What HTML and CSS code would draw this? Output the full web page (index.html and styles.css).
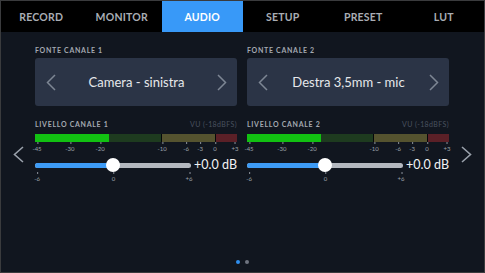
FILE: index.html
```html
<!DOCTYPE html>
<html lang="it">
<head>
    <meta charset="UTF-8">
    <meta name="viewport" content="width=device-width, initial-scale=1.0">
    <title>Audio</title>
    <link rel="stylesheet" href="styles.css">
</head>
<body>
    <div class="screen">
        <!-- barra delle schede -->
        <nav class="tabs">
            <div class="tab">RECORD</div>
            <div class="tab">MONITOR</div>
            <div class="tab active">AUDIO</div>
            <div class="tab">SETUP</div>
            <div class="tab">PRESET</div>
            <div class="tab">LUT</div>
        </nav>

        <main class="page">
            <div class="side">
                <svg width="11" height="17" viewBox="0 0 11 17"><polyline points="10,1 1.5,8.5 10,16" /></svg>
            </div>

            <div class="channels">
                <!-- canale 1 -->
                <section class="channel">
                    <div class="label">FONTE CANALE 1</div>
                    <div class="source">
                        <svg width="10" height="17" viewBox="0 0 10 17"><polyline points="9,1 1.5,8.5 9,16" /></svg>
                        <span>Camera - sinistra</span>
                        <svg width="10" height="17" viewBox="0 0 10 17"><polyline points="1,1 8.5,8.5 1,16" /></svg>
                    </div>

                    <div class="label level-head">
                        <span>LIVELLO CANALE 1</span>
                        <span class="vu">VU (-18dBFS)</span>
                    </div>
                    <div class="meter">
                        <div class="seg low"><div class="fill" style="width: 59%"></div></div>
                        <div class="seg mid"></div>
                        <div class="seg high"></div>
                    </div>
                    <div class="scale">
                        <span class="mark" style="left: 1%">-45</span>
                        <span class="mark" style="left: 17.3%">-30</span>
                        <span class="mark" style="left: 32.2%">-20</span>
                        <span class="mark" style="left: 62.9%">-10</span>
                        <span class="mark" style="left: 74.8%">-6</span>
                        <span class="mark" style="left: 81.7%">-3</span>
                        <span class="mark" style="left: 89.1%">0</span>
                        <span class="mark" style="left: 99%">+3</span>
                    </div>

                    <div class="slider-row">
                        <div class="slider">
                            <div class="track">
                                <div class="bar"><div class="bar-fill" style="width: 50%"></div></div>
                                <div class="thumb" style="left: 50%"></div>
                            </div>
                            <div class="scale gain">
                                <span class="mark" style="left: 1.3%">-6</span>
                                <span class="mark" style="left: 50.3%">0</span>
                                <span class="mark" style="left: 98.7%">+6</span>
                            </div>
                        </div>
                        <div class="value">+0.0 dB</div>
                    </div>
                </section>

                <!-- canale 2 -->
                <section class="channel">
                    <div class="label">FONTE CANALE 2</div>
                    <div class="source">
                        <svg width="10" height="17" viewBox="0 0 10 17"><polyline points="9,1 1.5,8.5 9,16" /></svg>
                        <span>Destra 3,5mm - mic</span>
                        <svg width="10" height="17" viewBox="0 0 10 17"><polyline points="1,1 8.5,8.5 1,16" /></svg>
                    </div>

                    <div class="label level-head">
                        <span>LIVELLO CANALE 2</span>
                        <span class="vu">VU (-18dBFS)</span>
                    </div>
                    <div class="meter">
                        <div class="seg low"><div class="fill" style="width: 59%"></div></div>
                        <div class="seg mid"></div>
                        <div class="seg high"></div>
                    </div>
                    <div class="scale">
                        <span class="mark" style="left: 1%">-45</span>
                        <span class="mark" style="left: 17.3%">-30</span>
                        <span class="mark" style="left: 32.2%">-20</span>
                        <span class="mark" style="left: 62.9%">-10</span>
                        <span class="mark" style="left: 74.8%">-6</span>
                        <span class="mark" style="left: 81.7%">-3</span>
                        <span class="mark" style="left: 89.1%">0</span>
                        <span class="mark" style="left: 99%">+3</span>
                    </div>

                    <div class="slider-row">
                        <div class="slider">
                            <div class="track">
                                <div class="bar"><div class="bar-fill" style="width: 50%"></div></div>
                                <div class="thumb" style="left: 50%"></div>
                            </div>
                            <div class="scale gain">
                                <span class="mark" style="left: 1.3%">-6</span>
                                <span class="mark" style="left: 50.3%">0</span>
                                <span class="mark" style="left: 98.7%">+6</span>
                            </div>
                        </div>
                        <div class="value">+0.0 dB</div>
                    </div>
                </section>
            </div>

            <div class="side">
                <svg width="11" height="17" viewBox="0 0 11 17"><polyline points="1,1 9.5,8.5 1,16" /></svg>
            </div>
        </main>

        <!-- indicatore pagina -->
        <div class="dots">
            <span class="dot on"></span>
            <span class="dot"></span>
        </div>
    </div>
</body>
</html>
```

FILE: styles.css
```css
* {
    box-sizing: border-box;
}

body {
    margin: 0;
    background: #000;
    font-family: Lato, "Open Sans", sans-serif;
}

.screen {
    width: 485px;
    height: 273px;
    border: 1px solid #3a3b3d;
    background: #11161f;
    display: flex;
    flex-direction: column;
}

/* schede in alto */
.tabs {
    display: grid;
    grid-template-columns: repeat(6, 1fr);
    height: 31px;
    background: #000;
}

.tab {
    display: flex;
    align-items: center;
    justify-content: center;
    color: #a9adb4;
    font-size: 10.5px;
    font-weight: bold;
    letter-spacing: 0.2px;
}

.tab.active {
    background: #3899f8;
    color: #fff;
}

.page {
    display: grid;
    grid-template-columns: 34px 1fr 35px;
    padding-top: 13px;
}

.side {
    display: flex;
    justify-content: center;
    padding-top: 101px;
}

.side svg polyline {
    fill: none;
    stroke: #9aa1ab;
    stroke-width: 1.6;
}

.channels {
    display: grid;
    grid-template-columns: 202px 202px;
    gap: 10px;
}

.label {
    font-size: 7px;
    line-height: 10px;
    font-weight: bold;
    letter-spacing: 0.7px;
    color: #a4a9b1;
    margin-bottom: 3px;
}

.source {
    height: 48px;
    background: #2b3446;
    border-radius: 3px;
    display: flex;
    align-items: center;
    justify-content: space-between;
    padding: 0 10px 0 11px;
    color: #e6e8eb;
    font-size: 13px;
}

.source svg polyline {
    fill: none;
    stroke: #7d8694;
    stroke-width: 1.5;
}

.level-head {
    display: flex;
    justify-content: space-between;
    margin-top: 13px;
    margin-bottom: 5px;
}

.vu {
    color: #4a525f;
    font-weight: normal;
    letter-spacing: 0.4px;
}

/* barra VU */
.meter {
    display: grid;
    grid-template-columns: 127fr 54fr 21fr;
    gap: 1px;
    height: 8px;
    background: #05070a;
}

.seg.low {
    background: #1e3b1f;
}

.seg.mid {
    background: #55532f;
}

.seg.high {
    background: #5b2027;
}

.fill {
    height: 100%;
    background: #12c112;
}

.scale {
    position: relative;
    height: 12px;
}

.mark {
    position: absolute;
    top: 3px;
    transform: translateX(-50%);
    font-size: 6px;
    line-height: 7px;
    color: #9ba1a9;
}

.mark::before {
    content: "";
    position: absolute;
    left: 50%;
    top: -3px;
    width: 1px;
    height: 2px;
    background: #8d939c;
}

/* guadagno */
.slider-row {
    display: flex;
    align-items: flex-start;
    gap: 3px;
    margin-top: 4px;
}

.slider {
    flex: 1;
}

.track {
    position: relative;
    height: 14px;
    display: flex;
    align-items: center;
}

.bar {
    width: 100%;
    height: 5px;
    border-radius: 3px;
    background: #b4b8bf;
    overflow: hidden;
}

.bar-fill {
    height: 100%;
    background: #3d9bf6;
}

.thumb {
    position: absolute;
    top: 0;
    width: 14px;
    height: 14px;
    margin-left: -7px;
    border-radius: 50%;
    background: #fff;
}

.gain {
    height: 10px;
}

.value {
    color: #f2f3f5;
    font-size: 12.5px;
    line-height: 14px;
}

/* pallini pagina */
.dots {
    margin-top: auto;
    padding-bottom: 8px;
    display: flex;
    justify-content: center;
    gap: 5px;
}

.dot {
    width: 4px;
    height: 4px;
    border-radius: 50%;
    background: #6f7480;
}

.dot.on {
    background: #2f8ff0;
}
```
